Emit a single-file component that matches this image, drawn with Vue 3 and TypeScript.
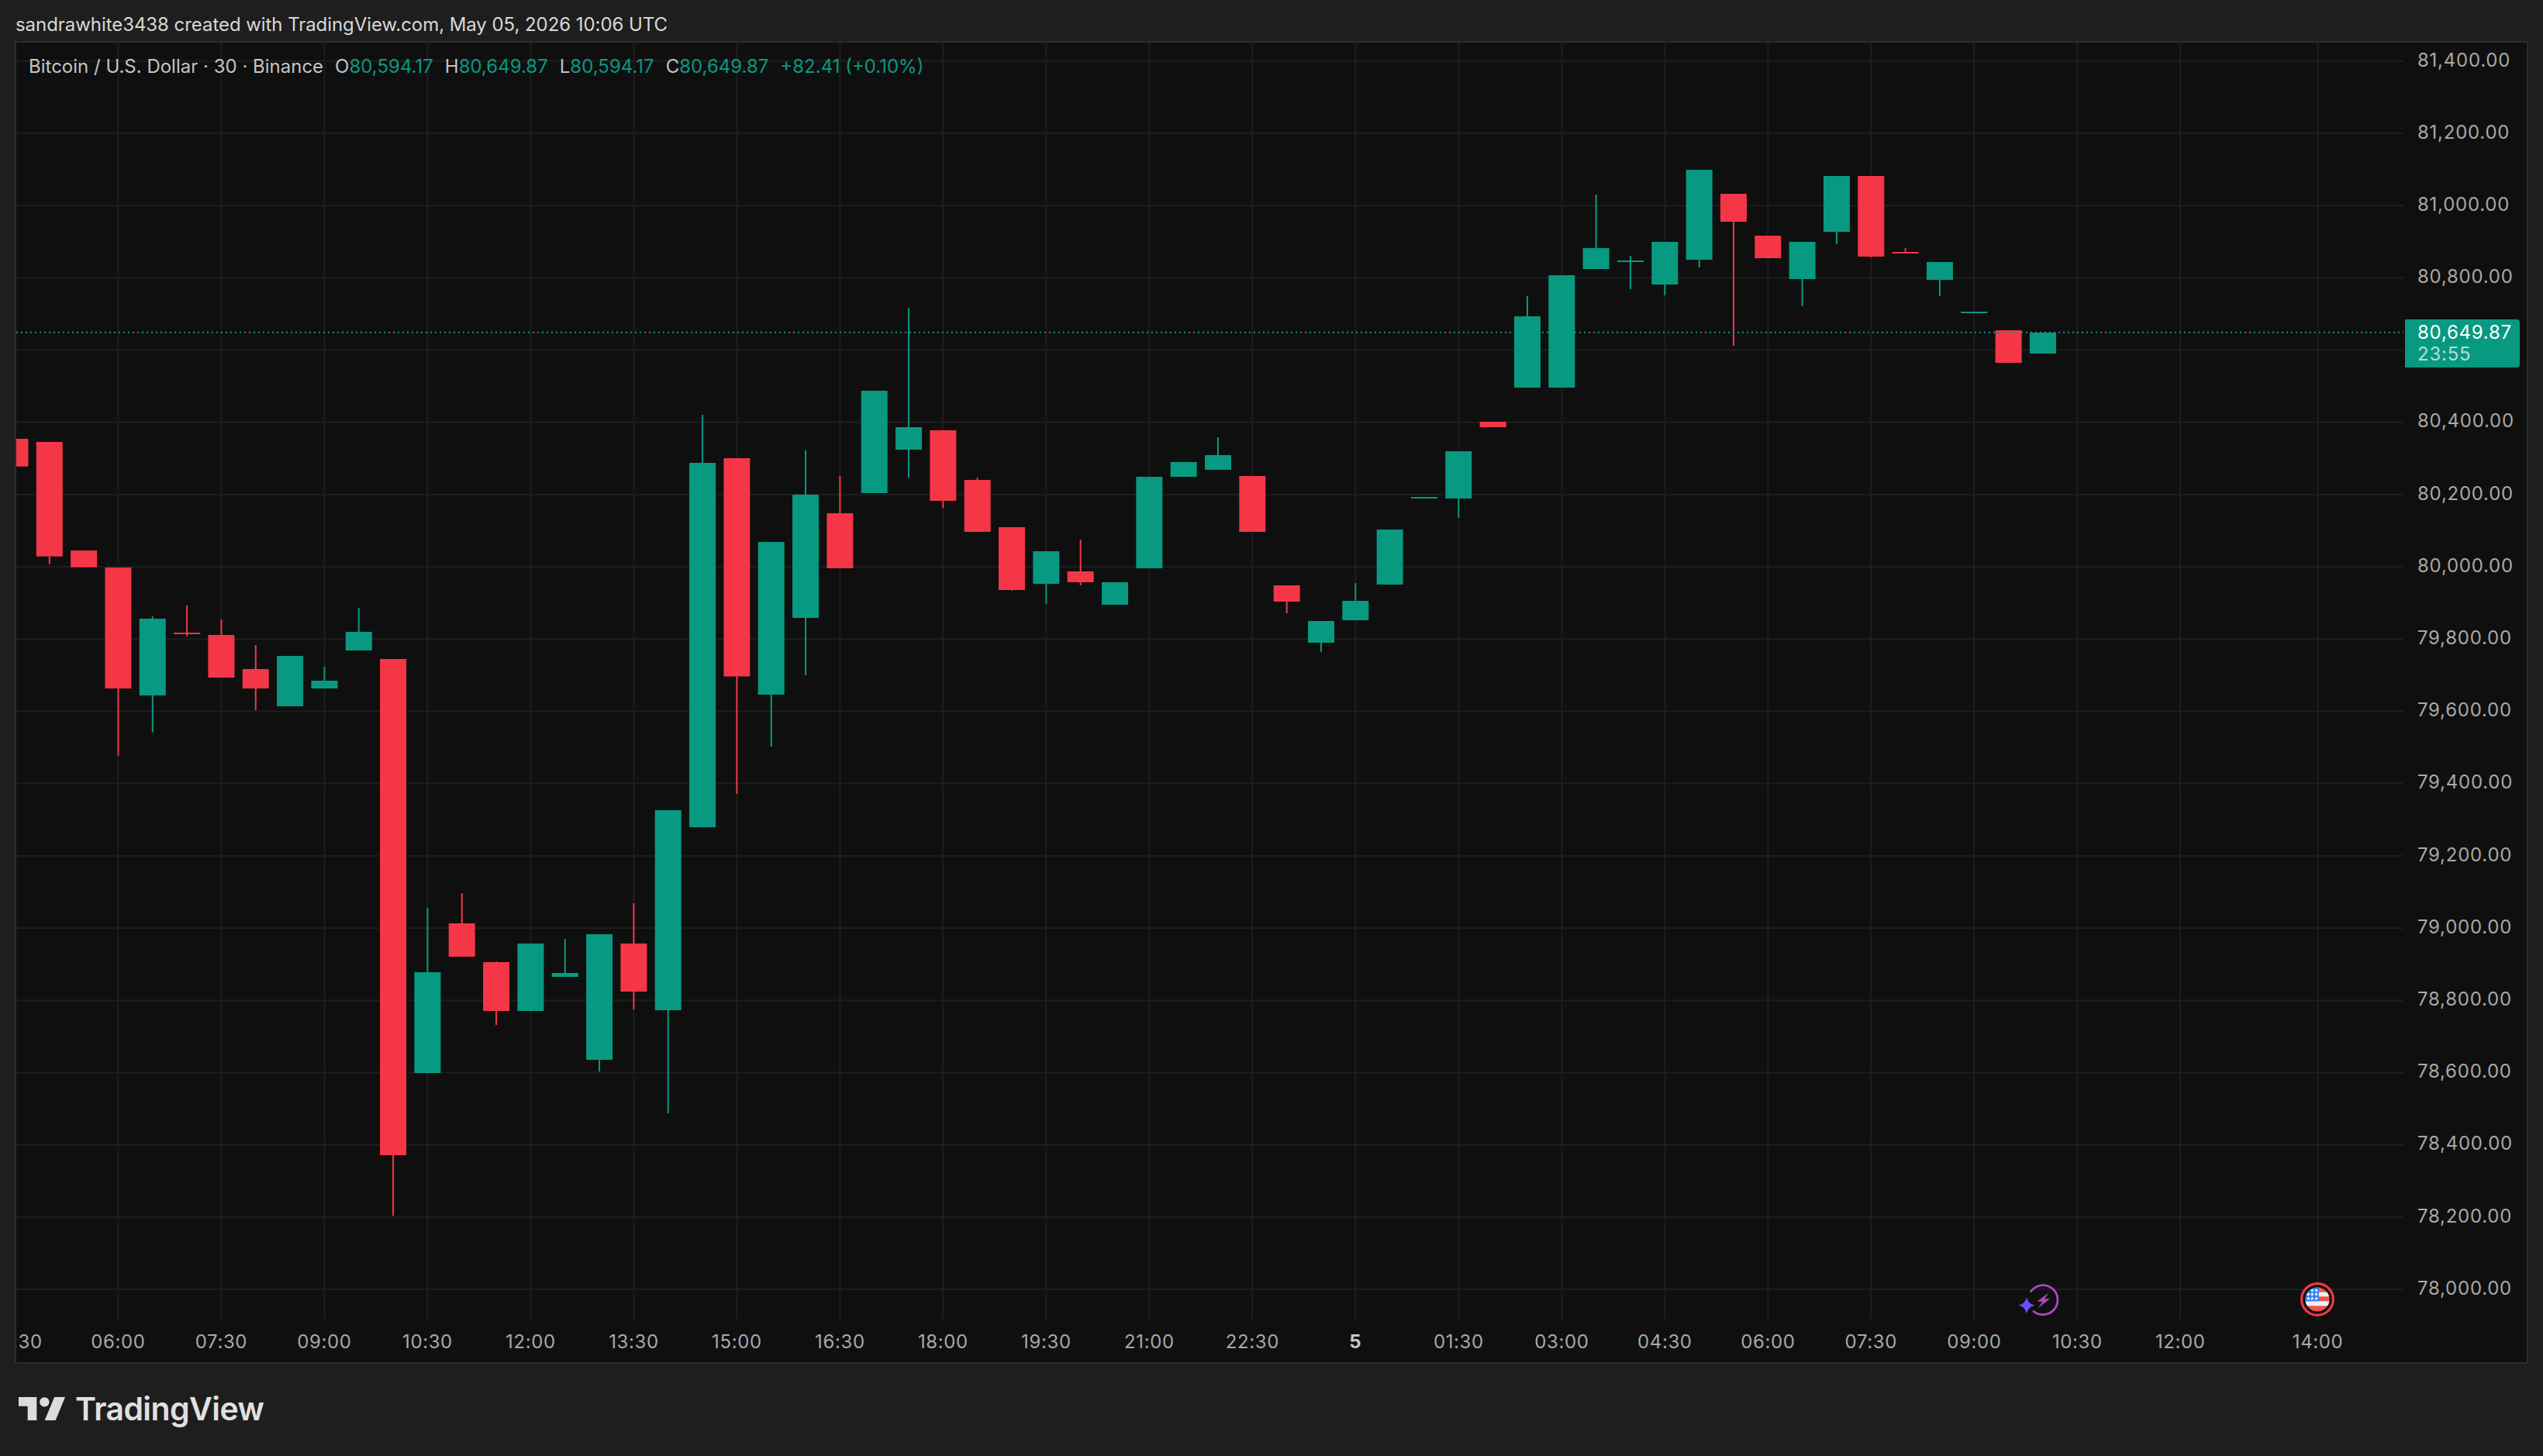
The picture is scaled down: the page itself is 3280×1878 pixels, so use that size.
<template>
  <div class="page">
    <div class="caption">sandrawhite3438 created with TradingView.com, May 05, 2026 10:06 UTC</div>

    <div class="frame">
      <!-- plot area -->
      <div class="plot">
        <svg class="plot-svg" viewBox="21 55 3079 1647" width="3079" height="1647">
          <rect v-for="y in gridY" :key="'h' + y" x="21" :y="y - 1" width="3079" height="2" fill="#1e1e1e" />
          <rect v-for="t in gridTicks" :key="'v' + t" :x="xOf(t) - 1" y="55" width="2" height="1647" fill="#1e1e1e" />

          <g v-for="(c, i) in candles" :key="i" :fill="c[0] === 'u' ? UP : DOWN">
            <rect
              v-if="c[3] !== null"
              :x="xOf(i - 1) - 1"
              :y="c[3] ?? 0"
              width="2"
              :height="(c[4] ?? c[2]) - (c[3] ?? 0)"
            />
            <rect
              v-else-if="c[4] !== null"
              :x="xOf(i - 1) - 1"
              :y="c[2]"
              width="2"
              :height="(c[4] ?? 0) - c[2]"
            />
            <rect :x="xOf(i - 1) - 17" :y="c[1]" width="34" :height="c[2] - c[1]" />
          </g>

          <line x1="21" y1="428.7" x2="3100" y2="428.7" stroke="#089981" stroke-width="2" stroke-dasharray="2 4" />

          <!-- earnings / news markers -->
          <g transform="translate(2600 1655)">
            <path d="M18.9 11.6A19 19 0 1 1 22.2 35.7" fill="none" stroke="#ab47bc" stroke-width="2.8" />
            <path d="M42.7 12.3 27.3 23.7H34.3L28.7 32.3 44 20.3H37Z" fill="#ab47bc" />
            <path d="M14 18.2Q15.8 26.9 24.5 28.7 15.8 30.5 14 39.2 12.2 30.5 3.5 28.7 12.2 26.9 14 18.2Z" fill="#6f4bff" />
          </g>
          <g transform="translate(2965 1652)">
            <clipPath id="flag-clip"><circle cx="24" cy="24" r="15.5" /></clipPath>
            <circle cx="24" cy="24" r="20.4" fill="#0f0f0f" stroke="#f23645" stroke-width="3.2" />
            <g clip-path="url(#flag-clip)">
              <rect x="8" y="8" width="32" height="32" fill="#f05252" />
              <rect x="8" y="14.7" width="32" height="5.6" fill="#f0f0f0" />
              <rect x="8" y="26.3" width="32" height="6" fill="#f0f0f0" />
              <rect x="8" y="8" width="18" height="18.3" fill="#2f80ed" />
              <path
                v-for="s in stars"
                :key="s[0] + '-' + s[1]"
                :transform="`translate(${s[0]} ${s[1]})`"
                d="M0-2.4.7-.7 2.4-.7 1.1.4 1.5 2.2 0 1.2-1.5 2.2-1.1.4-2.4-.7-.7-.7Z"
                fill="#fff"
              />
            </g>
          </g>
        </svg>

        <div class="legend">
          <span class="title">Bitcoin / U.S. Dollar · 30 · Binance</span>
          <span v-for="item in ohlc" :key="item.k" class="ohlc">{{ item.k }}<b>{{ item.v }}</b></span>
          <span class="change">+82.41 (+0.10%)</span>
        </div>
      </div>

      <!-- price scale -->
      <div class="price-axis">
        <div class="price-list">
          <span v-for="(p, i) in prices" :key="i" class="price">{{ p }}</span>
        </div>
        <div class="last-price">
          <span>80,649.87</span>
          <span class="countdown">23:55</span>
        </div>
      </div>

      <!-- time scale -->
      <div class="time-axis">
        <span
          v-for="l in timeLabels"
          :key="l.i"
          class="time"
          :class="{ day: l.t === '5' }"
          :style="{ left: xOf(l.i) - 21 + 'px' }"
        >{{ l.t }}</span>
      </div>
    </div>

    <div class="brand">
      <svg class="brand-mark" viewBox="0 0 36 18" width="60" height="30">
        <path d="M14 18H7V7H0V0h14zM28.6 18h-8.4L27.7 0H36z" fill="#dcdcdc" />
        <circle cx="20" cy="3.8" r="3.7" fill="#dcdcdc" />
      </svg>
      <span class="brand-name">TradingView</span>
    </div>
  </div>
</template>

<script setup lang="ts">
const UP = '#089981'
const DOWN = '#f43647'

// dir, body top, body bottom, wick top, wick bottom (chart pixels)
type Candle = ['u' | 'd', number, number, number | null, number | null]

const candles: Candle[] = [
  ['d', 566, 601.7, null, null],
  ['d', 570, 717.7, null, 727.7],
  ['d', 710, 731.7, null, null],
  ['d', 732, 888, null, 974.7],
  ['u', 798, 897, 795, 944.7],
  ['d', 816, 818, 781, 821],
  ['d', 819, 874, 799, 874],
  ['d', 863, 888, 832, 916],
  ['u', 846, 911, null, null],
  ['u', 878, 888, 860, 888],
  ['u', 815, 839, 784, 839],
  ['d', 850, 1490, null, 1568],
  ['u', 1254, 1384, 1171, 1384],
  ['d', 1191, 1234, 1152, 1234],
  ['d', 1241, 1304, 1240, 1322],
  ['u', 1217, 1304, null, null],
  ['u', 1255, 1260, 1211, 1260],
  ['u', 1205, 1367, null, 1382],
  ['d', 1217, 1279, 1165, 1302],
  ['u', 1045, 1303, null, 1436],
  ['u', 597, 1067, 535, 1067],
  ['d', 591, 872.5, null, 1024],
  ['u', 699, 896, null, 963],
  ['u', 638, 797, 581, 871],
  ['d', 662, 733, 614, 733],
  ['u', 504, 636, null, null],
  ['u', 551, 580, 397, 616],
  ['d', 555, 646, null, 655],
  ['d', 619, 686, 616, 686],
  ['d', 680, 761, null, 762],
  ['u', 711, 753, null, 779],
  ['d', 737, 751, 696, 755],
  ['u', 751, 780, null, null],
  ['u', 615, 733, null, null],
  ['u', 596, 615, null, null],
  ['u', 587, 606, 564, 606],
  ['d', 614, 686, null, null],
  ['d', 755, 776, null, 791],
  ['u', 801, 829, null, 841],
  ['u', 775, 800, 752, 800],
  ['u', 683, 754, null, null],
  ['u', 641, 643, null, null],
  ['u', 582, 643, null, 668],
  ['d', 544, 551, null, null],
  ['u', 408, 500, 382, 500],
  ['u', 355, 500, null, null],
  ['u', 320, 347, 251, 347],
  ['u', 336, 338, 330, 373],
  ['u', 312, 367, null, 381],
  ['u', 219, 335, null, 345],
  ['d', 250, 286, null, 446],
  ['d', 304, 333, null, null],
  ['u', 312, 360, null, 395],
  ['u', 227, 299, null, 315],
  ['d', 227, 331, null, 332],
  ['d', 325, 327, 320, 327],
  ['u', 338, 361, null, 382],
  ['u', 402, 404, null, null],
  ['d', 426, 468, null, null],
  ['u', 429, 456, null, null]
]

const xOf = (i: number) => 63.8 + 44.33 * i

const gridY = Array.from({ length: 18 }, (_, k) => 78.7 + 93.2 * k)

const timeLabels = [
  { i: -1, t: '04:30' },
  { i: 2, t: '06:00' },
  { i: 5, t: '07:30' },
  { i: 8, t: '09:00' },
  { i: 11, t: '10:30' },
  { i: 14, t: '12:00' },
  { i: 17, t: '13:30' },
  { i: 20, t: '15:00' },
  { i: 23, t: '16:30' },
  { i: 26, t: '18:00' },
  { i: 29, t: '19:30' },
  { i: 32, t: '21:00' },
  { i: 35, t: '22:30' },
  { i: 38, t: '5' },
  { i: 41, t: '01:30' },
  { i: 44, t: '03:00' },
  { i: 47, t: '04:30' },
  { i: 50, t: '06:00' },
  { i: 53, t: '07:30' },
  { i: 56, t: '09:00' },
  { i: 59, t: '10:30' },
  { i: 62, t: '12:00' },
  { i: 66, t: '14:00' }
]

const gridTicks = timeLabels.filter((l) => l.i > 0).map((l) => l.i)

// 80,600 sits under the last price tag
const prices = [
  '81,400.00', '81,200.00', '81,000.00', '80,800.00', '', '80,400.00',
  '80,200.00', '80,000.00', '79,800.00', '79,600.00', '79,400.00', '79,200.00',
  '79,000.00', '78,800.00', '78,600.00', '78,400.00', '78,200.00', '78,000.00'
]

const ohlc = [
  { k: 'O', v: '80,594.17' },
  { k: 'H', v: '80,649.87' },
  { k: 'L', v: '80,594.17' },
  { k: 'C', v: '80,649.87' }
]

const stars = [
  [17.3, 12.3], [22.7, 12.3],
  [12.3, 17.3], [17.3, 17.3], [22.7, 17.3],
  [12.3, 22.7], [17.3, 22.7], [22.7, 22.7]
]
</script>

<style>
html,
body {
  margin: 0;
  background: #1e1e1e;
}
</style>

<style scoped>
.page {
  width: 3280px;
  height: 1878px;
  display: flex;
  flex-direction: column;
  background: #1e1e1e;
  font-family: Inter, "Liberation Sans", sans-serif;
  overflow: hidden;
}

.caption {
  height: 53px;
  padding: 18px 0 0 20px;
  box-sizing: border-box;
  font-size: 24px;
  line-height: 28px;
  letter-spacing: -0.06px;
  color: #d8d8d8;
}

.frame {
  width: 3242px;
  height: 1706px;
  margin-left: 19px;
  box-sizing: border-box;
  border: 2px solid #2c2c2c;
  background: #0f0f0f;
  display: grid;
  grid-template-columns: 3079px 159px;
  grid-template-rows: 1647px 55px;
}

.plot {
  position: relative;
  overflow: hidden;
}

.plot-svg {
  display: block;
}

.legend {
  position: absolute;
  left: 16px;
  top: 17px;
  display: flex;
  gap: 15px;
  font-size: 24px;
  line-height: 28px;
  color: #c4c4c4;
  white-space: nowrap;
}

.ohlc b {
  font-weight: 400;
  color: #089981;
}

.change {
  color: #089981;
}

.price-axis {
  position: relative;
  overflow: hidden;
}

.price-list {
  display: grid;
  grid-auto-rows: 93.2px;
  margin-top: -24.6px;
}

.price {
  display: flex;
  align-items: center;
  padding-left: 18px;
  font-size: 24px;
  letter-spacing: 0.75px;
  color: #a8a8a8;
}

.last-price {
  position: absolute;
  left: 2px;
  top: 357px;
  width: 148px;
  height: 62px;
  box-sizing: border-box;
  padding: 3px 0 0 16px;
  display: flex;
  flex-direction: column;
  background: #089981;
  border-radius: 0 4px 4px 0;
  font-size: 24px;
  letter-spacing: 0.75px;
  line-height: 28px;
  color: #fff;
}

.countdown {
  color: rgba(255, 255, 255, 0.7);
}

.time-axis {
  grid-column: 1 / 3;
  position: relative;
  overflow: hidden;
}

.time {
  position: absolute;
  top: 15px;
  transform: translateX(-50%);
  font-size: 24px;
  line-height: 28px;
  letter-spacing: 0.6px;
  color: #a8a8a8;
}

.time.day {
  font-weight: 700;
  color: #c8c8c8;
}

.brand {
  display: flex;
  align-items: flex-start;
  gap: 13px;
  padding: 43px 0 0 24px;
}

.brand-mark {
  display: block;
}

.brand-name {
  font-size: 41px;
  font-weight: 600;
  line-height: 30px;
  letter-spacing: -0.6px;
  color: #e0e0e0;
}
</style>
